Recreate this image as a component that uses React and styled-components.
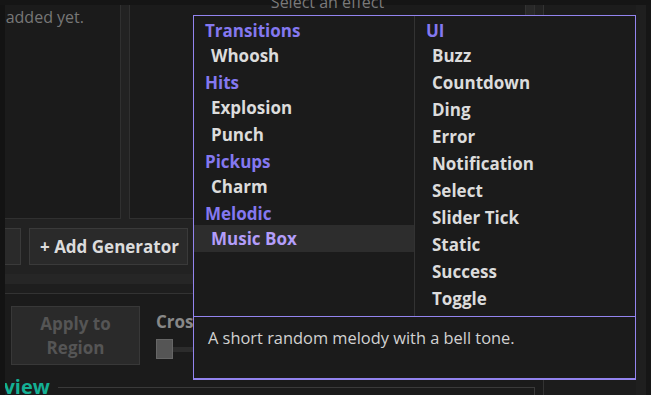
import React from "react";
import styled, { createGlobalStyle } from "styled-components";

const GlobalStyle = createGlobalStyle`
  html, body {
    margin: 0;
    padding: 0;
    background: #1b1b1b;
  }
  body {
    font-family: "Open Sans", "Noto Sans", sans-serif;
  }
  * {
    box-sizing: border-box;
  }
`;

const Screen = styled.div`
    position: relative;
    width: 651px;
    height: 395px;
    overflow: hidden;
    display: flex;
    flex-direction: column;
    background: #1b1b1b;
`;

const TopEdge = styled.div`
    height: 5px;
    flex: none;
    background: #151515;
`;

const Body = styled.div`
    flex: 1;
    display: flex;
    min-height: 0;
`;

const LeftEdge = styled.div`
    width: 5px;
    flex: none;
    background: #131313;
    position: relative;
    z-index: 1;
`;

const Workspace = styled.div`
    width: 538px;
    flex: none;
    display: flex;
    flex-direction: column;
    background: #222222;
`;

const PanelRow = styled.div`
    height: 214px;
    flex: none;
    display: flex;
    gap: 8px;
    padding-right: 8px;
`;

const ListPanel = styled.div`
    width: 116px;
    flex: none;
    background: #1b1b1b;
    border-right: 1px solid #303030;
    border-bottom: 1px solid #303030;
    overflow: hidden;
`;

const EmptyNote = styled.div`
    width: 79px;
    margin-top: 1px;
    display: flex;
    justify-content: flex-end;
    white-space: nowrap;
    color: #777;
    font-size: 16px;
`;

const EffectPanel = styled.div`
    flex: 1;
    display: flex;
    background: #1b1b1b;
    border: 1px solid #303030;
    border-top: none;
`;

const EffectBody = styled.div`
    flex: 1;
    display: flex;
    justify-content: center;
`;

const Placeholder = styled.div`
    margin-top: -14px;
    color: #7a7a7a;
    font-size: 16px;
`;

const ScrollStrip = styled.div`
    width: 9px;
    background: #282828;
    border-left: 1px solid #333;
`;

const ButtonRow = styled.div`
    display: flex;
    gap: 8px;
    margin-top: 9px;
    height: 37px;
    flex: none;
`;

const ToolButton = styled.div`
    height: 37px;
    display: flex;
    align-items: center;
    padding: 0 ${(p) => (p.$clipped ? 0 : 10)}px;
    background: #2a2a2a;
    border: 1px solid #3a3a3a;
    border-left: ${(p) => (p.$clipped ? "none" : "1px solid #3a3a3a")};
    width: ${(p) => p.$width}px;
    flex: none;
    color: #dcdcdc;
    font-size: 17px;
    font-weight: 700;
    white-space: nowrap;
`;

const ScrollTrack = styled.div`
    margin-top: 9px;
    height: 10px;
    flex: none;
    background: #262626;
`;

const TrackGap = styled.div`
    height: 10px;
    flex: none;
    background: #1e1e1e;
    border-bottom: 1px solid #333;
`;

const LowerPanel = styled.div`
    height: 77px;
    flex: none;
    display: flex;
    align-items: flex-start;
    padding: 12px 0 0 6px;
    background: #1b1b1b;
`;

const ApplyButton = styled.div`
    width: 129px;
    height: 59px;
    flex: none;
    display: flex;
    align-items: center;
    justify-content: center;
    text-align: center;
    background: #2a2a2a;
    border: 1px solid #383838;
    color: #555;
    font-size: 17px;
    font-weight: 700;
    line-height: 24px;
`;

const FadeGroup = styled.div`
    margin-left: 16px;
    display: flex;
    flex-direction: column;
`;

const FadeLabel = styled.div`
    margin-top: 4px;
    color: #888;
    font-size: 17px;
    font-weight: 700;
    line-height: 24px;
`;

const SliderRow = styled.div`
    margin-top: 5px;
    display: flex;
    align-items: center;
`;

const Thumb = styled.div`
    width: 17px;
    height: 20px;
    background: #555;
    border: 1px solid #666;
`;

const Track = styled.div`
    width: 320px;
    height: 5px;
    background: #2c2c2c;
`;

const PreviewRow = styled.div`
    flex: 1;
    display: flex;
    background: #1b1b1b;
    overflow: hidden;
`;

const PreviewTitle = styled.div`
    margin: 2px 0 0 -35px;
    color: #14b094;
    font-size: 20px;
    font-weight: 700;
    line-height: 27px;
`;

const PreviewBox = styled.div`
    flex: 1;
    margin: 16px 8px 0 8px;
    border-top: 1px solid #3a3a3a;
    border-right: 1px solid #3a3a3a;
`;

const SideArea = styled.div`
    flex: 1;
    display: flex;
    justify-content: flex-end;
    background: #1c1c1c;
    border-left: 1px solid #333;
`;

const SideShade = styled.div`
    width: ${(p) => p.$width}px;
    background: ${(p) => p.$color};
`;

/* dropdown overlay */
const Menu = styled.div`
    position: absolute;
    left: 193px;
    top: 15px;
    width: 443px;
    height: 365px;
    display: flex;
    flex-direction: column;
    background: #1b1b1b;
    border: 1px solid #9384ef;
    border-bottom-width: 2px;
    z-index: 5;
`;

const MenuColumns = styled.div`
    height: 300px;
    flex: none;
    display: flex;
`;

const MenuColumn = styled.div`
    width: ${(p) => (p.$width ? `${p.$width}px` : "auto")};
    flex: ${(p) => (p.$width ? "none" : "1")};
    padding-top: 1px;
    border-right: ${(p) => (p.$divider ? "1px solid #333" : "none")};
`;

const GroupTitle = styled.div`
    padding: 3px 0 0 11px;
    line-height: 22px;
    color: #8478f0;
    font-size: 17px;
    font-weight: 700;
`;

const MenuItem = styled.div`
    padding: 1px 0 0 17px;
    line-height: 26px;
    font-size: 17px;
    font-weight: 700;
    color: ${(p) => (p.$active ? "#b39dfa" : "#dcdcdc")};
    background: ${(p) => (p.$active ? "#2d2d2d" : "transparent")};
`;

const Description = styled.div`
    flex: 1;
    border-top: 1px solid #9384ef;
    padding: 10px 14px;
    color: #d2d2d2;
    font-size: 16.4px;
    line-height: 22px;
`;

const leftGroups = [
    { title: "Transitions", items: ["Whoosh"] },
    { title: "Hits", items: ["Explosion", "Punch"] },
    { title: "Pickups", items: ["Charm"] },
    { title: "Melodic", items: ["Music Box"] },
];

const rightGroups = [
    {
        title: "UI",
        items: ["Buzz", "Countdown", "Ding", "Error", "Notification", "Select", "Slider Tick", "Static", "Success", "Toggle"],
    },
];

const SELECTED = "Music Box";

const GroupList = ({ groups }) => (
    <>
        {groups.map((g) => (
            <React.Fragment key={g.title}>
                <GroupTitle>{g.title}</GroupTitle>
                {g.items.map((it) => (
                    <MenuItem key={it} $active={it === SELECTED}>{it}</MenuItem>
                ))}
            </React.Fragment>
        ))}
    </>
);

const App = () => {
    return (
        <Screen>
            <GlobalStyle />
            <TopEdge />
            <Body>
                <LeftEdge />
                <Workspace>
                    <PanelRow>
                        <ListPanel>
                            <EmptyNote>No generators added yet.</EmptyNote>
                        </ListPanel>
                        <EffectPanel>
                            <EffectBody>
                                <Placeholder>Select an effect</Placeholder>
                            </EffectBody>
                            <ScrollStrip />
                        </EffectPanel>
                    </PanelRow>
                    <ButtonRow>
                        <ToolButton $clipped $width={16} />
                        <ToolButton $width={159}>+ Add Generator</ToolButton>
                    </ButtonRow>
                    <ScrollTrack />
                    <TrackGap />
                    <LowerPanel>
                        <ApplyButton>Apply to<br />Region</ApplyButton>
                        <FadeGroup>
                            <FadeLabel>Crossfade</FadeLabel>
                            <SliderRow>
                                <Thumb />
                                <Track />
                            </SliderRow>
                        </FadeGroup>
                    </LowerPanel>
                    <PreviewRow>
                        <PreviewTitle>Preview</PreviewTitle>
                        <PreviewBox />
                    </PreviewRow>
                </Workspace>
                <SideArea>
                    <SideShade $width={10} $color="#1f1f1f" />
                    <SideShade $width={5} $color="#161616" />
                </SideArea>
            </Body>

            <Menu>
                <MenuColumns>
                    <MenuColumn $width={221} $divider>
                        <GroupList groups={leftGroups} />
                    </MenuColumn>
                    <MenuColumn>
                        <GroupList groups={rightGroups} />
                    </MenuColumn>
                </MenuColumns>
                <Description>A short random melody with a bell tone.</Description>
            </Menu>
        </Screen>
    );
};

export default App;
